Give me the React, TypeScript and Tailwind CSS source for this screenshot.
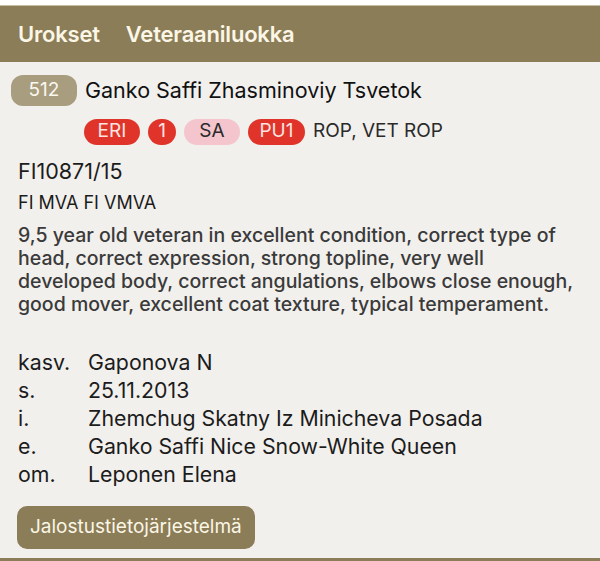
import type React from "react"

const info: [string, string][] = [
  ["kasv.", "Gaponova N"],
  ["s.", "25.11.2013"],
  ["i.", "Zhemchug Skatny Iz Minicheva Posada"],
  ["e.", "Ganko Saffi Nice Snow-White Queen"],
  ["om.", "Leponen Elena"],
]

const App: React.FC = () => {
  return (
    <div
      className="w-[600px] h-[561px] bg-[#f2f0ed] flex flex-col overflow-hidden text-[#1c1c1c]"
      style={{ fontFamily: "Inter, 'Noto Sans', sans-serif" }}
    >
      <div className="h-[6px] bg-white border-b border-[#c9bfa3]" />
      <div className="h-[56px] bg-[#8b7d57] flex items-center gap-[26px] px-[18px] text-[22px] font-semibold text-[#fbf6e6] tracking-[-0.2px]">
        <span>Urokset</span>
        <span>Veteraaniluokka</span>
      </div>

      <div className="flex-1 flex flex-col px-[18px]">
        <div className="flex items-center gap-[8px] mt-[12px] -ml-[7px]">
          <span className="w-[66px] h-[31px] rounded-[12px] bg-[#a89e7f] text-[#fbf8ef] text-[19px] flex items-center justify-center">
            512
          </span>
          <span className="text-[21.5px] text-[#111]">Ganko Saffi Zhasminoviy Tsvetok</span>
        </div>

        <div className="flex items-center gap-[8px] ml-[66px] mt-[11px] text-[19px]">
          <span className="h-[26px] w-[56px] rounded-full bg-[#e0342a] text-[#fde4e0] flex items-center justify-center">ERI</span>
          <span className="h-[26px] w-[28px] rounded-full bg-[#e0342a] text-[#fde4e0] flex items-center justify-center">1</span>
          <span className="h-[26px] w-[56px] rounded-full bg-[#f4c5cd] text-[#2a2a2a] flex items-center justify-center">SA</span>
          <span className="h-[26px] w-[57px] rounded-full bg-[#e0342a] text-[#fde4e0] flex items-center justify-center">PU1</span>
          <span className="text-[#2a2a2a]">ROP, VET ROP</span>
        </div>

        <div className="mt-[11px] text-[21.5px] leading-[28px]">FI10871/15</div>
        <div className="mt-[6px] text-[18px] leading-[24px]">FI MVA FI VMVA</div>

        <p className="mt-[9px] text-[19.5px] leading-[23px] font-medium text-[#3a3a3a]">
          9,5 year old veteran in excellent condition, correct type of
          <br />
          head, correct expression, strong topline, very well
          <br />
          developed body, correct angulations, elbows close enough,
          <br />
          good mover, excellent coat texture, typical temperament.
        </p>

        <div className="mt-[32px] flex flex-col text-[21.3px] leading-[28px]">
          {info.map(([k, v]) => (
            <div key={k} className="flex">
              <span className="w-[70px] shrink-0">{k}</span>
              <span>{v}</span>
            </div>
          ))}
        </div>

        <div className="mt-[18px]">
          <button className="h-[43px] px-[13px] -ml-[1px] rounded-[10px] bg-[#8b7d57] text-[#fbf6e6] text-[19px]">
            Jalostustietojärjestelmä
          </button>
        </div>
      </div>
      <div className="h-[3px] bg-[#8b7d57]" />
    </div>
  )
}

export default App
